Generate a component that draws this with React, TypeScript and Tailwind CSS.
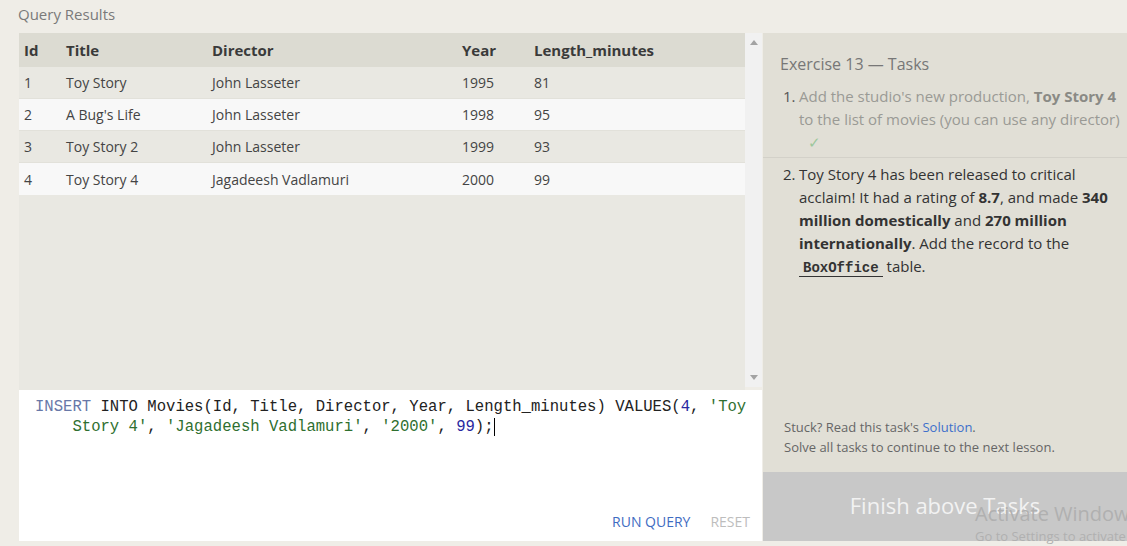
const rows = [
  { id: 1, title: "Toy Story", director: "John Lasseter", year: 1995, length: 81 },
  { id: 2, title: "A Bug's Life", director: "John Lasseter", year: 1998, length: 95 },
  { id: 3, title: "Toy Story 2", director: "John Lasseter", year: 1999, length: 93 },
  { id: 4, title: "Toy Story 4", director: "Jagadeesh Vadlamuri", year: 2000, length: 99 },
];

const cols = "grid grid-cols-[42px_146px_250px_72px_1fr]";

function ResultsTable() {
  return (
    <div className="flex h-[357px]">
      <div className="w-[726px] bg-[#e9e8e2]">
        <div className={`${cols} h-[34px] items-center bg-[#dcdbd2] text-[15px] font-bold text-[#3a3a3a]`}>
          <div className="pl-[5px]">Id</div>
          <div className="pl-[5px]">Title</div>
          <div className="pl-[5px]">Director</div>
          <div className="pl-[5px]">Year</div>
          <div className="pl-[5px]">Length_minutes</div>
        </div>
        {rows.map((r, i) => (
          <div
            key={r.id}
            className={`${cols} h-[32px] items-center text-[14px] text-[#444] ${
              i % 2 === 0 ? "bg-[#e9e8e2]" : "bg-[#f8f8f8]"
            } ${i < rows.length - 1 ? "border-b border-[#e2e1da]" : ""}`}
          >
            <div className="pl-[5px]">{r.id}</div>
            <div className="pl-[5px]">{r.title}</div>
            <div className="pl-[5px]">{r.director}</div>
            <div className="pl-[5px]">{r.year}</div>
            <div className="pl-[5px]">{r.length}</div>
          </div>
        ))}
      </div>
      {/* scrollbar */}
      <div className="flex h-[354px] w-[17px] flex-col items-center justify-between bg-[#f1f1f1] py-[7px]">
        <svg width="8" height="5" viewBox="0 0 8 5">
          <path d="M0 5 L4 0 L8 5 Z" fill="#a3a3a3" />
        </svg>
        <svg width="8" height="5" viewBox="0 0 8 5">
          <path d="M0 0 L4 5 L8 0 Z" fill="#a3a3a3" />
        </svg>
      </div>
    </div>
  );
}

function Editor() {
  return (
    <div className="flex h-[151px] w-[743px] flex-col bg-white">
      <div
        className="flex-1 pl-[16px] pr-[10px] pt-[7px] text-[15.6px] leading-[20px] text-[#222]"
        style={{ fontFamily: '"Liberation Mono", monospace' }}
      >
        <div className="pl-[4ch] -indent-[4ch]">
          <span className="text-[#6878a8]">INSERT</span> INTO Movies(Id, Title, Director, Year,
          Length_minutes) VALUES(<span className="text-[#2828a0]">4</span>,{" "}
          <span className="text-[#2f6f2f]">'Toy Story 4'</span>,{" "}
          <span className="text-[#2f6f2f]">'Jagadeesh Vadlamuri'</span>,{" "}
          <span className="text-[#2f6f2f]">'2000'</span>, <span className="text-[#2828a0]">99</span>
          <span className="border-r border-black">);</span>
        </div>
      </div>
      <div className="flex h-[30px] items-start justify-end gap-[20px] pr-[12px] text-[14px]">
        <span className="text-[#3f6cc2]">RUN QUERY</span>
        <span className="text-[#bdbdbd]">RESET</span>
      </div>
    </div>
  );
}

function TaskPanel() {
  return (
    <div className="flex h-[508px] w-[364px] flex-col">
      <div className="relative flex flex-1 flex-col bg-[#e1dfd6]">
        <div className="pl-[17px] pt-[19px] text-[16px] text-[#777]">Exercise 13 — Tasks</div>
        <ol className="mt-[9px] text-[15px] leading-[23px]">
          <li className="flex border-b border-[#d3d1c9] pb-[3px] pl-[20px] text-[#9a9a95]">
            <span className="w-[16px] shrink-0 text-[#555]">1.</span>
            <div className="pr-[4px]">
              Add the studio's new production, <b className="text-[#8a8a85]">Toy Story 4</b> to the
              list of movies (you can use any director)
              <div className="pl-[9px] text-[15px] text-[#9cc79c]">✓</div>
            </div>
          </li>
          <li className="flex pl-[20px] pt-[5px] text-[#333]">
            <span className="w-[16px] shrink-0">2.</span>
            <div className="pr-[4px]">
              Toy Story 4 has been released to critical acclaim! It had a rating of <b>8.7</b>, and
              made <b>340 million domestically</b> and <b>270 million internationally</b>. Add the
              record to the{" "}
              <code
                className="border-b border-[#333] px-[4px] text-[14px] font-bold"
                style={{ fontFamily: '"Liberation Mono", monospace' }}
              >
                BoxOffice
              </code>{" "}
              table.
            </div>
          </li>
        </ol>
        <div className="mt-auto pb-[15px] pl-[21px] text-[13px] leading-[20px] text-[#666]">
          <div>
            Stuck? Read this task's <span className="text-[#3d6fcb]">Solution</span>.
          </div>
          <div>Solve all tasks to continue to the next lesson.</div>
        </div>
      </div>
      <div className="flex h-[69px] items-center justify-center bg-[#c8c8c8] pb-[3px] text-[22px] text-[#f2f2f2]">
        Finish above Tasks
      </div>
    </div>
  );
}

export default function App() {
  return (
    <div
      className="relative h-[546px] w-[1127px] overflow-hidden bg-[#efede7]"
      style={{ fontFamily: '"Open Sans", "Noto Sans", sans-serif' }}
    >
      <div className="h-[33px] pl-[18px] pt-[3px] text-[15px] text-[#7a7a7a]">Query Results</div>
      <div className="flex pl-[19px]">
        <div className="w-[744px]">
          <ResultsTable />
          <Editor />
        </div>
        <TaskPanel />
      </div>
      {/* OS watermark overlay */}
      <div className="pointer-events-none absolute left-[975px] top-[501px] whitespace-nowrap text-[#b0b0b0]">
        <div className="text-[20px] leading-[26px]">Activate Windows</div>
        <div className="text-[13px] leading-[18px]">Go to Settings to activate Windows.</div>
      </div>
    </div>
  );
}
